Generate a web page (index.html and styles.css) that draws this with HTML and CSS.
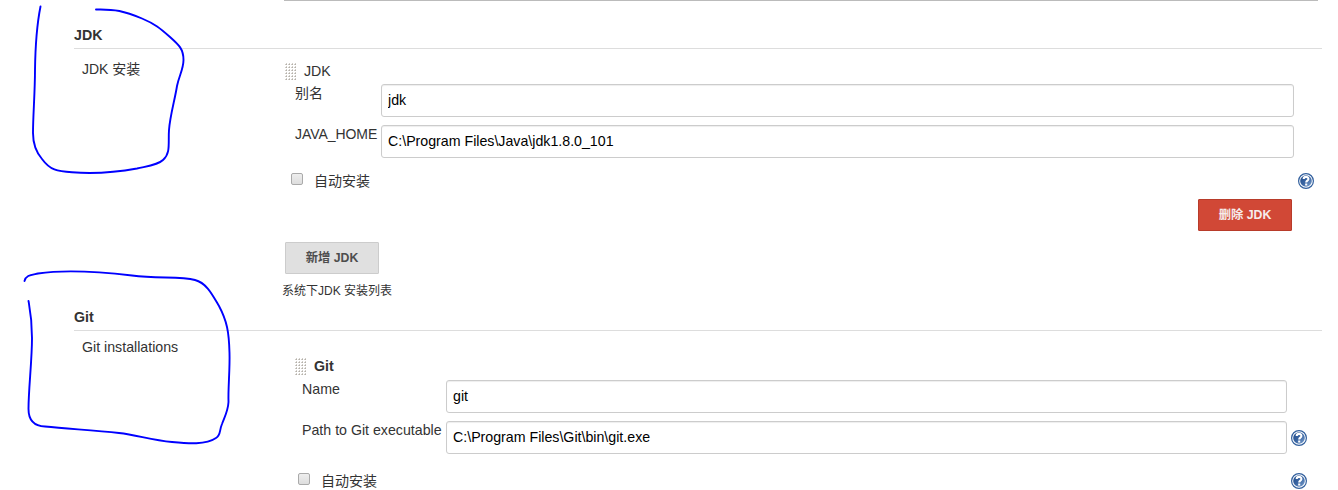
FILE: index.html
```html
<!DOCTYPE html>
<html lang="zh">
<head>
<meta charset="utf-8">
<title>Jenkins</title>
<link rel="stylesheet" href="styles.css">
</head>
<body>
<svg class="defs" width="0" height="0">
  <defs>
    <linearGradient id="blue" x1="0" y1="0" x2="1" y2="1"><stop offset="0" stop-color="#1e4a8a"/><stop offset=".5" stop-color="#3a65a2"/><stop offset="1" stop-color="#7fa3d0"/></linearGradient>
    <pattern id="dots" width="3" height="3" patternUnits="userSpaceOnUse"><path d="M1 0h1v1h-1zM0 1h1v1H0z" fill="#d0cdc8"/><path d="M1 1h1v1H1z" fill="#b4b0a9"/></pattern>
    <symbol id="help" viewBox="0 0 16 16">
      <circle cx="8" cy="8" r="7.4" fill="#fff" stroke="#315f9d" stroke-width="1.2"/>
      <circle cx="8" cy="8" r="5.8" fill="url(#blue)"/>
      <path d="M5.7 6.1C5.7 3.2 10.4 3.2 10.4 5.9C10.4 7.6 8.2 7.6 8.2 9.5M8.2 10.6V12.5" fill="none" stroke="#fff" stroke-width="2.1"/>
    </symbol>
  </defs>
</svg>
<main class="page">
  <div class="previous-field"></div>
  <section>
    <h2 class="section-title">JDK</h2>
    <div class="section-body">
      <div class="section-label jdk-label">JDK 安装</div>
      <div class="content jdk">
        <div class="item-title"><svg class="grip" width="12" height="18"><rect width="12" height="18" fill="url(#dots)"/></svg>JDK</div>
        <div class="field"><label>别名</label><input type="text" value="jdk"></div>
        <div class="field"><label class="tight">JAVA_HOME</label><input type="text" value="C:\Program Files\Java\jdk1.8.0_101"></div>
        <div class="option"><span class="check"></span><span class="option-text">自动安装</span><svg class="help"><use href="#help"/></svg></div>
        <div class="actions"><button class="button danger">删除 JDK</button></div>
        <button class="button">新增 JDK</button>
        <p class="description">系统下JDK 安装列表</p>
      </div>
    </div>
  </section>
  <section>
    <h2 class="section-title">Git</h2>
    <div class="section-body">
      <div class="section-label git-label">Git installations</div>
      <div class="content git">
        <div class="item-title bold"><svg class="grip" width="12" height="18"><rect width="12" height="18" fill="url(#dots)"/></svg>Git</div>
        <div class="field"><label>Name</label><input type="text" value="git"></div>
        <div class="field"><label>Path to Git executable</label><input type="text" value="C:\Program Files\Git\bin\git.exe"><svg class="help"><use href="#help"/></svg></div>
        <div class="option"><span class="check"></span><span class="option-text">自动安装</span><svg class="help"><use href="#help"/></svg></div>
      </div>
    </div>
  </section>
</main>
<svg class="ink" width="240" height="450" viewBox="0 0 240 450">
  <path d="M40.500 6.500C36 29 35.300 48 35 70C35 92 33 116 33 133C33 145 36 152 42 159C50 170 57 171.500 72 172.300C95 174 118 172 137 168.500C148 166 158 165 163 160C171 153 168 143 169 130C170 116 175 99 177 86C179 76 183.500 69 183.500 60C183.500 49 179 45 170 37C160 28 155 24 142 18.500C124 11 115 9 96 9.500"/>
  <path d="M24.500 281C26 275 31 275 38 273.500C65 269.500 102 272 132 275.500C157 279 180 276 195 280C207 283 213 296 219 306C227 321 229 332 229.500 353C230 370 228 388 228.500 402C228 411 225 416 222 424C219 431 221 435 216 438C206 445 188 443.500 172 442C151 440 137 435 119 433C93 430 68 429 45 426.500C33 426 28.500 419 28.500 409C28.500 389 32 361 32 338C32 319 30.500 312 28.500 301"/>
</svg>
</body>
</html>
```
FILE: styles.css
```css
* { box-sizing: border-box; }
body { margin: 0; background: #fff; color: #333; font: 14.2px/18px "Liberation Sans", "Noto Sans CJK SC", sans-serif; }
.defs { position: absolute; }
.page { width: 1338px; height: 490px; padding: 0 16px 0 74px; overflow: hidden; }
.previous-field { height: 1px; margin: 0 4px 25px 210px; background: #bbb; }
.section-title { height: 23px; margin: 0; font-size: 14.2px; line-height: 18px; border-bottom: 1px solid #ddd; }
.section-body { display: flex; }
.section-label { flex: none; padding-left: 8px; }
.jdk-label { width: 211px; padding-top: 11px; font-size: 14px; }
.git-label { width: 221px; padding-top: 7px; }
.content { flex: 1; }
.jdk { padding-top: 13px; }
.git { padding-top: 26px; }
.item-title { display: flex; height: 22px; line-height: 19px; }
.git .item-title { height: 23px; }
.bold { font-weight: bold; }
.grip { margin: 1px 7px 0 0; }
.git .grip { margin-right: 7px; }
.field { display: flex; height: 41px; }
.field label { flex: none; white-space: nowrap; }
.jdk .field { padding: 0 28px 0 10px; }
.jdk .field label { width: 86px; font-size: 14px; }
.field .tight { letter-spacing: -.05px; }
.git .field { padding-left: 7px; }
.git .field label { width: 144px; }
.git .field input { flex: none; width: 841px; }
.field input { flex: 1; min-width: 0; height: 33px; padding: 0 6px 1px; border: 1px solid #ccc; border-radius: 3px; background: #fff; color: #000; font: inherit; box-shadow: inset 0 1px 1px rgba(0,0,0,.07); }
.help { flex: none; display: block; width: 16px; height: 16px; }
.git .field .help { margin: 9px 0 0 4px; }
.option { display: flex; height: 33px; padding: 7px 8px 0 6px; }
.git .option { height: 40px; padding: 11px 15px 0 3px; }
.check { width: 12px; height: 12px; border: 1px solid #aaa; border-radius: 2px; background: linear-gradient(#eee, #ddd); }
.option-text { flex: 1; margin-left: 11px; font-size: 14px; line-height: 17px; }
.actions { display: flex; justify-content: flex-end; height: 43px; padding-right: 30px; }
.button { display: block; width: 94px; height: 32px; padding: 0 0 2px; border: 1px solid #ccc; border-radius: 1px; background: #e0e0e0; color: #4d4d4d; font: bold 12.3px "Liberation Sans", "Noto Sans CJK SC", sans-serif; }
.danger { border-color: #b83b2a; background: #d14836; color: #f6eceb; }
.description { height: 34px; margin: 0 0 0 -3px; padding-top: 8px; font-size: 12px; }
.ink { position: absolute; left: 0; top: 0; fill: none; stroke: #00f; stroke-width: 1.9; stroke-linecap: round; stroke-linejoin: round; pointer-events: none; }
```
